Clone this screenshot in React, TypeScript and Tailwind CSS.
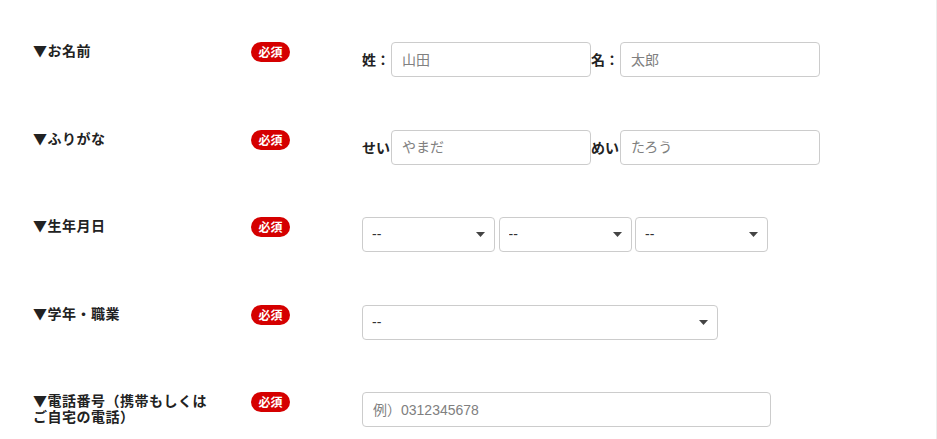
const font = { fontFamily: '"Liberation Sans", "Noto Sans CJK JP", sans-serif' };
const jp = { fontFamily: '"Noto Sans CJK JP", sans-serif' };

const Badge = () => (
  <span
    className="flex h-[20px] w-[39px] items-center justify-center rounded-full bg-[#d50000] text-[12px] font-bold leading-none text-white"
    style={jp}
  >
    必須
  </span>
);

const TextInput = ({ placeholder, width }: { placeholder: string; width: string }) => (
  <input
    type="text"
    placeholder={placeholder}
    className={`${width} h-[35px] rounded-[4px] border border-[#ccc] bg-white px-[10px] text-[14px] text-[#333] outline-none placeholder:text-[#808080]`}
    style={font}
  />
);

const Select = ({ width }: { width: string }) => (
  <div className={`relative ${width} h-[35px]`}>
    <select
      className="h-full w-full appearance-none rounded-[4px] border border-[#ccc] bg-white pl-[9px] text-[14px] text-[#333] outline-none"
      style={font}
      defaultValue=""
    >
      <option value="">--</option>
    </select>
    <svg
      className="pointer-events-none absolute right-[10px] top-[15px]"
      width="9"
      height="5"
      viewBox="0 0 9 5"
    >
      <path d="M0 0h9L4.5 5z" fill="#444" />
    </svg>
  </div>
);

const Row = ({ label, children }: { label: React.ReactNode; children: React.ReactNode }) => (
  <div className="flex h-[35px] items-start">
    <div className="w-[218px]">
      <p
        className="w-[184px] text-[14px] font-bold leading-[16px] tracking-[0.5px] text-[#222]"
        style={jp}
      >
        {label}
      </p>
    </div>
    <div className="flex w-[111px]">
      <Badge />
    </div>
    <div className="flex items-center">{children}</div>
  </div>
);

const FieldLabel = ({ children }: { children: React.ReactNode }) => (
  <span className="w-[29px] text-[14px] font-bold text-[#222]" style={jp}>
    {children}
  </span>
);

export default function App() {
  return (
    <div className="h-[439px] w-[937px] border-r border-[#ececec] bg-white" style={font}>
      <div className="flex flex-col gap-[52.5px] pl-[33px] pt-[42px]">
        <Row label="▼お名前">
          <FieldLabel>姓：</FieldLabel>
          <TextInput placeholder="山田" width="w-[200px]" />
          <FieldLabel>名：</FieldLabel>
          <TextInput placeholder="太郎" width="w-[200px]" />
        </Row>
        <Row label="▼ふりがな">
          <FieldLabel>せい</FieldLabel>
          <TextInput placeholder="やまだ" width="w-[200px]" />
          <FieldLabel>めい</FieldLabel>
          <TextInput placeholder="たろう" width="w-[200px]" />
        </Row>
        <Row label="▼生年月日">
          <div className="flex gap-[3.5px]">
            <Select width="w-[133px]" />
            <Select width="w-[133px]" />
            <Select width="w-[133px]" />
          </div>
        </Row>
        <Row label="▼学年・職業">
          <Select width="w-[356px]" />
        </Row>
        <Row label="▼電話番号（携帯もしくはご自宅の電話）">
          <TextInput placeholder="例）0312345678" width="w-[409px]" />
        </Row>
      </div>
    </div>
  );
}
